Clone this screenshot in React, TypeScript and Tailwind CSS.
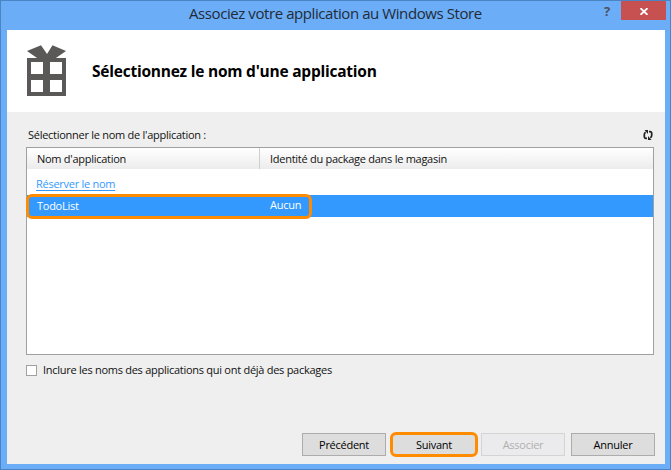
import React from "react";

function GiftIcon() {
  return (
    <svg width="39" height="52" viewBox="0 0 39 52" className="block" fill="#5a5957">
      <path d="M0 6 14 0.300 20 9 25.500 0.300 39 6 27.500 14H11.500Z" />
      <path fillRule="evenodd" d="M0 13H39V51H0ZM4 17V29H16V17ZM23 17V29H35V17ZM4 35V47H16V35ZM23 35V47H35V35Z" />
    </svg>
  );
}

function RefreshIcon() {
  return (
    <svg width="10" height="10" viewBox="0 0 10 10" className="block" fill="none" stroke="#222" strokeWidth="1.700">
      <path d="M4 8.300H3Q1.300 8.300 1.300 6.500V4.500Q1.300 3 2.700 2.300M6 1.700H7Q8.700 1.700 8.700 3.500V5.500Q8.700 7 7.300 7.700" />
      <path d="M1.500 0H5V4ZM5 6V10H8.500Z" fill="#222" stroke="none" />
    </svg>
  );
}

const button = "flex h-[23px] w-[84px] items-center justify-center border";

export default function App() {
  return (
    <div className="flex h-[470px] w-[671px] flex-col overflow-hidden whitespace-nowrap border border-[#4b84c4] bg-[#6badf6] font-['Open_Sans','Noto_Sans',sans-serif] text-[11px] leading-[16px] tracking-[-0.270px] text-[#111]">
      <div className="flex h-[29px] shrink-0 items-start">
        <div className="w-[188px]" />
        <div className="w-[300px] pt-px text-[15px] leading-[22px] tracking-[-0.420px] text-[#222b36]">Associez votre application au Windows Store</div>
        <div className="ml-[115px] w-[17px] pt-px text-[13px] font-bold leading-[18px] text-[#4b5260]">?</div>
        <div className="flex h-[19px] w-[45px] items-center justify-center bg-[#c75050]">
          <svg width="8" height="7" viewBox="0 0 8 7" className="mt-[2px]" stroke="white" strokeWidth="1.800"><path d="M0.500 0.200 7.500 6.800M7.500 0.200 0.500 6.800" /></svg>
        </div>
      </div>
      <div className="ml-[6px] flex h-[434px] w-[658px] shrink-0 flex-col bg-[#efefef]">
        <div className="flex h-[82px] shrink-0 items-start bg-white pl-[20px] pt-[15px]">
          <GiftIcon />
          <h1 className="ml-[26px] mt-[15px] text-[15.500px] font-bold leading-[22px] tracking-[-0.230px] text-black">Sélectionnez le nom d'une application</h1>
        </div>
        <div className="flex h-[35px] shrink-0 items-start justify-between pl-[21px] pr-[12px] pt-[15px]">
          <span>Sélectionner le nom de l'application :</span>
          <div className="pt-[3px]"><RefreshIcon /></div>
        </div>
        <div className="ml-[19px] h-[208px] w-[628px] shrink-0 border border-[#a0a0a0] bg-white">
          <div className="flex h-[21px] bg-linear-to-b from-white to-[#ececec]">
            <div className="w-[233px] border-r border-[#cfcfcf] pl-[10px] pt-[3px]">Nom d'application</div>
            <div className="pl-[10px] pt-[3px]">Identité du package dans le magasin</div>
          </div>
          <div className="h-[26px] pl-[9px] pt-[7px] text-[#3399ff]"><span className="underline underline-offset-2">Réserver le nom</span></div>
          <div className="relative flex h-[22px] bg-[#3399ff] text-white">
            <div className="w-[233px] pl-[10px] pt-[3px]">TodoList</div>
            <div className="pl-[10px] pt-[2px]">Aucun</div>
            <div className="absolute -left-px -top-px h-[25px] w-[286px] rounded-[6px] border-[3px] border-[#ff8c00]" />
          </div>
        </div>
        <div className="flex h-[78px] shrink-0 items-start pl-[19px] pt-[7px]">
          <div className="mt-[3px] size-[11px] border border-[#a0a0a0] bg-white" />
          <span className="ml-[6px]">Inclure les noms des applications qui ont déjà des packages</span>
        </div>
        <div className="flex h-[23px] items-center pl-[295px] text-black">
          <div className={button + " border-[#acacac] bg-[#dddddd]"}><span>Précédent</span></div>
          <div className="ml-[4px] flex h-[25px] w-[88px] shrink-0 items-center justify-center rounded-[6px] border-[3px] border-[#ff8c00] bg-[#dddddd]"><span>Suivant</span></div>
          <div className={button + " ml-[3px] border-[#d4d4d4] bg-[#ebebed] text-[#b0b0b0]"}><span>Associer</span></div>
          <div className={button + " ml-[6px] border-[#acacac] bg-[#dddddd]"}><span>Annuler</span></div>
        </div>
      </div>
    </div>
  );
}
